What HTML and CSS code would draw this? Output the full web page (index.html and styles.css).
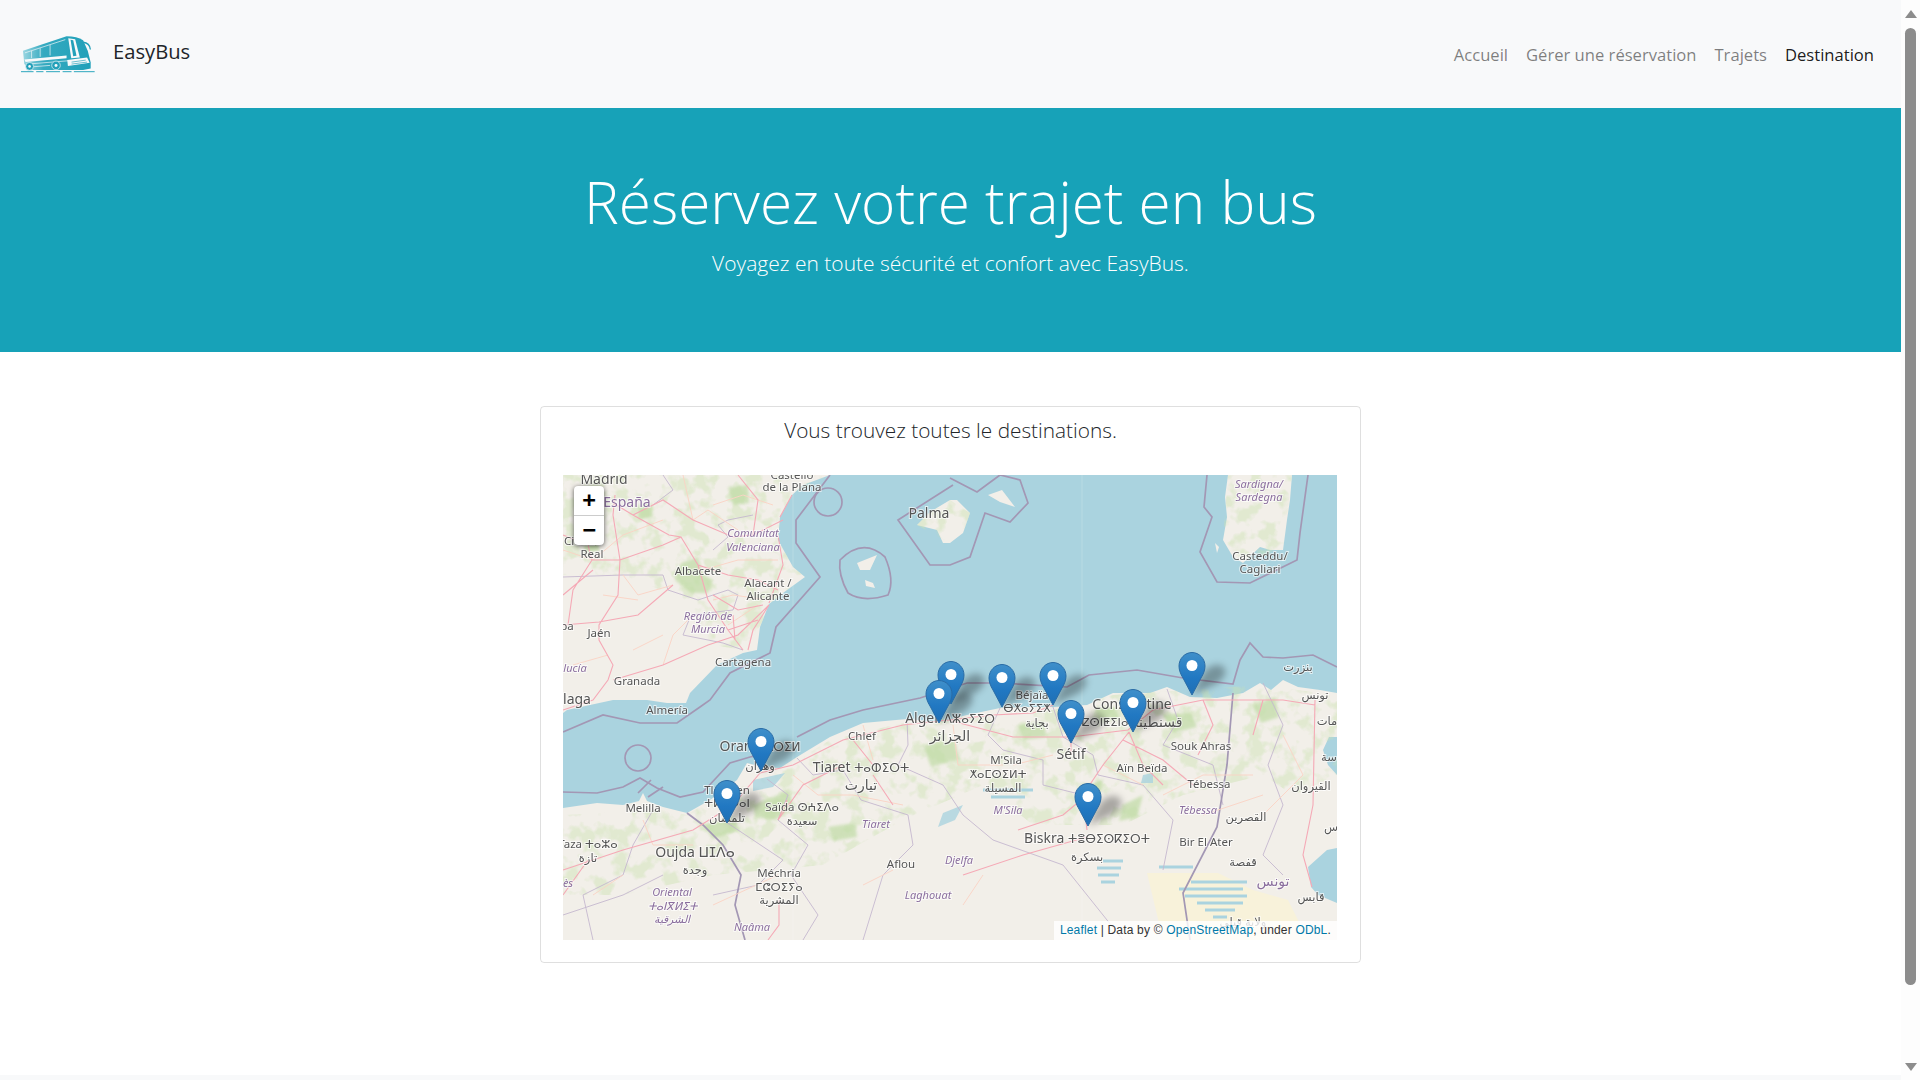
FILE: index.html
```html
<!DOCTYPE html>
<html lang="fr">

<head>
    <meta charset="UTF-8">
    <meta name="viewport" content="width=device-width, initial-scale=1.0">
    <title>EasyBus - Destination</title>
    <link rel="stylesheet" href="styles.css">
</head>

<body>
    <div class="page">
        <header class="navbar">
            <a class="brand" href="#">
                <svg class="brand-logo" viewBox="60 105 228 112" aria-hidden="true">
                    <defs>
                        <linearGradient id="busfade" x1="0" x2="1" y1="0" y2="0">
                            <stop offset="0" stop-color="#9ad6e1" />
                            <stop offset="0.3" stop-color="#35aac0" />
                            <stop offset="1" stop-color="#20a0b9" />
                        </linearGradient>
                    </defs>
                    <path fill="url(#busfade)" d="M68 150 L200 106 Q232 106 250 118 L264 150 L273 185 L273 203 L250 208 L90 208 L72 190 Z" />
                    <path fill="none" stroke="#f8f9fa" stroke-width="2" d="M74 156 L196 116 M94 150 L94 172 M120 142 L120 168 M150 132 L150 164" />
                    <path fill="#f8f9fa" d="M72 176 L200 164 L200 172 L76 184 Z" />
                    <path fill="none" stroke="#f8f9fa" stroke-width="2" d="M82 190 L205 180 M100 198 L150 194" />
                    <path fill="#f8f9fa" d="M205 112 L226 115 L240 170 L214 172 Z" />
                    <path fill="#23a0b9" d="M212 116 L220 118 L230 165 L220 166 Z" />
                    <path fill="#f8f9fa" d="M202 178 L262 170 L270 186 L204 196 Z" />
                    <path fill="none" stroke="#23a0b9" stroke-width="2" d="M215 184 L258 178 M215 190 L262 184" />
                    <circle cx="88" cy="197" r="12" fill="#23a0b9" stroke="#f8f9fa" stroke-width="2" />
                    <circle cx="168" cy="194" r="13" fill="#23a0b9" stroke="#f8f9fa" stroke-width="2" />
                    <circle cx="88" cy="197" r="4" fill="#f8f9fa" />
                    <circle cx="168" cy="194" r="4.500" fill="#f8f9fa" />
                    <path fill="none" stroke="#23a0b9" stroke-width="4" d="M250 124 Q270 126 272 146" />
                    <path fill="none" stroke="#2ba6bd" stroke-width="3" d="M62 213 H100 M108 213 H130 M138 213 H180 M188 213 H215 M222 213 H285" />
                </svg>
                <span class="brand-name">EasyBus</span>
            </a>
            <nav>
                <ul class="nav-list">
                    <li><a href="#">Accueil</a></li>
                    <li><a href="#">Gérer une réservation</a></li>
                    <li><a href="#">Trajets</a></li>
                    <li><a class="active" href="#">Destination</a></li>
                </ul>
            </nav>
        </header>

        <section class="hero">
            <h1>Réservez votre trajet en bus</h1>
            <p>Voyagez en toute sécurité et confort avec EasyBus.</p>
        </section>

        <main class="content">
            <div class="card">
                <h2>Vous trouvez toutes le destinations.</h2>
                <div class="map">
                    <svg class="map-canvas" viewBox="0 0 774 465" aria-label="Carte des destinations">
                        <defs>
                            <linearGradient id="pinfill" x1="0" x2="0" y1="0" y2="1">
                                <stop offset="0" stop-color="#3f8fca" />
                                <stop offset="0.6" stop-color="#2178c2" />
                                <stop offset="1" stop-color="#1f6fb4" />
                            </linearGradient>
                            <!-- patchy green on the hills -->
                            <filter id="mottle" x="0" y="0" width="100%" height="100%" color-interpolation-filters="sRGB">
                                <feTurbulence type="fractalNoise" baseFrequency="0.06" numOctaves="3" seed="7" />
                                <feColorMatrix type="matrix" values="0 0 0 0 0.80  0 0 0 0 0.89  0 0 0 0 0.70  6 0 0 0 -2.900" />
                            </filter>
                            <clipPath id="greenland">
                                <path d="M0 0 H267 L229 20 L217 42 L215 65 L230 92 L242 102 L206 129 L197 152 L180 175 L150 170 L110 120 L60 100 L0 100 Z" />
                                <path d="M354 50 L367 37 L387 25 L407 38 L400 58 L387 68 Z M665 0 H729 L720 75 L680 88 L660 65 Z" />
                                <path d="M0 340 L100 335 L124 340 L174 308 L217 296 L267 265 L344 247 L490 235 L550 220 L697 210 L757 218 L774 222 V300 L730 320 L700 300 L620 320 L560 350 L470 350 L420 310 L340 345 L260 390 L150 400 L60 420 L0 420 Z" />
                            </clipPath>
                            <g id="pin-shadow">
                                <path d="M0 0 L26 -12 Q40 -24 28 -30 Q18 -32 10 -20 Z" fill="rgba(0,0,0,.3)" class="pin-blur" />
                            </g>
                            <g id="pin">
                                <path d="M0 0 L-9 -17 C-11.500 -21 -13 -25 -13 -29 C-13 -36.500 -7 -42.500 0 -42.500 C7 -42.500 13 -36.500 13 -29 C13 -25 11.500 -21 9 -17 Z" fill="url(#pinfill)" stroke="#2a6ca6" stroke-width="1" />
                                <circle cx="0" cy="-29.500" r="5.500" fill="#fff" />
                            </g>
                        </defs>

                        <g class="map-base">
                            <rect class="water" width="774" height="465" />

                            <!-- land -->
                            <path class="land-eu" d="M0 0 H267 L240 10 L229 20 L217 42 L215 65 L230 92 L242 102 L224 115 L206 129 L197 152 L194 175 L180 178 L154 190 L127 218 L123 228 L104 228 L84 225 L50 225 L4 235 L0 238 Z" />
                            <path class="land-eu" d="M354 50 L367 37 L387 25 L394 25 L407 38 L400 58 L387 68 L380 68 L374 55 Z M425 20 L439 15 L452 32 L437 27 Z M294 88 L314 80 L307 95 L297 95 Z M302 105 L310 108 L312 113 L303 111 Z" />
                            <path class="land-eu" d="M665 0 H729 L727 25 L724 45 L720 75 L707 75 L697 72 L680 88 L670 82 L660 65 L664 42 L662 22 Z M652 68 L656 72 L654 78 Z" />
                            <path class="land-af" d="M0 333 L34 328 L60 330 L76 326 L80 318 L84 326 L100 332 L124 338 L147 325 L174 305 L184 288 L200 292 L217 293 L234 282 L267 262 L300 248 L344 244 L377 247 L404 240 L437 233 L460 232 L490 232 L524 230 L550 218 L587 218 L604 212 L627 222 L654 223 L680 218 L697 208 L708 215 L720 205 L735 212 L757 215 L774 218 V262 L766 262 L760 275 L765 290 L774 300 V373 L764 375 L745 392 L748 412 L755 420 L774 428 V465 H0 Z" />
                            <path class="land-sand" d="M584 398 H655 L690 415 L725 425 L745 465 H600 Z" />

                            <!-- green areas -->
                            <rect class="mottled" width="774" height="465" filter="url(#mottle)" clip-path="url(#greenland)" />
                            <path class="forest" d="M118 88 L135 82 L140 100 L150 105 L145 118 L128 118 L112 105 Z M75 30 L88 28 L90 42 L76 44 Z M20 66 L34 62 L36 76 L22 78 Z M165 12 L185 10 L186 28 L170 30 Z" />
                            <path class="forest" d="M190 330 L225 316 L232 332 L212 345 L192 342 Z M265 352 L292 348 L294 362 L270 366 Z M360 270 L392 266 L396 284 L368 292 Z M455 250 L480 246 L484 262 L460 265 Z M532 232 L552 232 L556 244 L536 248 Z M600 240 L628 238 L634 252 L610 258 Z M690 230 L712 222 L716 242 L698 248 Z M560 330 L580 320 L574 342 L556 346 Z M524 312 L540 304 L536 322 L524 326 Z M140 350 L172 342 L176 355 L150 364 Z" />

                            <!-- salt lakes -->
                            <g class="salt">
                                <path d="M628 407 H684 M616 414 H680 M622 421 H684 M634 428 H680 M642 435 H672 M650 442 H664 M596 392 H630 M540 386 H560 M534 393 H558 M535 400 H556 M538 407 H552 M420 315 H470 M428 322 H462" />
                            </g>
                            <path class="lake" d="M380 338 L400 330 L392 345 L375 352 Z M190 305 L222 298 L210 312 L190 316 Z M580 300 L590 298 L590 308 L578 308 Z" />

                            <!-- tile seams -->
                            <path class="seam" d="M230 0 V465 M519 0 V465" />

                            <!-- regional borders -->
                            <g class="region">
                                <path d="M100 0 L110 15 L90 30 M190 40 L165 45 L155 50 L165 62 L150 75 M0 102 L60 100 L100 100 L105 115 L135 125 L165 115 L175 120 L170 135 L128 140 L120 160 L160 168 L180 175" />
                                <path d="M204 304 L225 320 L215 345 L245 370 L228 400 L255 440 L240 465 M234 283 L250 300 L280 295 L298 325 L345 340 L350 370 L320 400 L300 465 M344 244 L345 270 L335 290 L380 310 L400 340 L430 365 L500 390 L540 440 L560 465 M437 233 L425 260 L440 275 L480 285 L480 310 L520 320 M490 232 L500 262 L530 280 L535 300 L580 310 L610 345 L600 395 M604 214 L615 245 L600 270 L650 290 L660 330 M700 208 L720 250 L705 290 L720 330 L700 380 L720 400 M90 335 L70 370 L60 400 L20 420 L30 465 M160 345 L220 385 L195 410 L150 420 M0 440 L60 420 L100 400" />
                            </g>

                            <!-- country borders and sea limits -->
                            <g class="border">
                                <path d="M124 338 L140 350 L160 370 L178 400 L172 430 L182 465 M670 218 L664 290 L654 352 L620 418 L627 465" />
                                <path d="M267 0 L233 45 L233 68 L257 102 L213 152 L207 178 L167 198 L147 225 L137 232 L114 248 L77 248 L40 240 L0 257" />
                                <path d="M0 317 L34 318 L60 312 L77 303 L94 313 L117 322 L140 317 L154 302 L167 288 L187 282 L205 278" />
                                <path d="M234 262 L267 245 L300 235 L357 223 L404 208 L437 208 L504 212 L526 200 L574 195 L620 203 L670 209 L677 185 L687 168 L700 182 L720 183 L750 180 L774 192" />
                                <path d="M644 0 L641 32 L649 42 L637 77 L654 107 L687 108 L734 85 L737 58 L745 0" />
                                <path d="M390 10 L335 45 L367 90 L387 90 L407 82 L422 38 L447 47 L465 28 L457 5 L437 0 L414 17 L387 3" />
                                <path d="M277 85 Q300 62 322 82 Q332 105 325 120 Q300 128 285 118 Q275 100 277 85 Z" />
                                <circle cx="265" cy="27" r="14" />
                                <circle cx="75" cy="283" r="13" />
                                <path d="M75 318 L88 305 M85 322 L100 312" />
                            </g>

                            <!-- minor roads -->
                            <g class="road-minor">
                                <path d="M0 75 L30 85 L60 60 L100 45 M60 100 L75 120 L110 110 M120 0 L130 45 L145 35 L175 55 M140 95 L175 85 L215 85 M150 125 L170 120 L205 125 M100 190 L110 160 L130 140 M40 120 L75 125 M10 190 L45 180 M70 175 L100 160 M210 30 L180 20 L150 30 M165 150 L195 130" />
                                <path d="M230 300 L255 320 L290 320 L340 330 M300 250 L310 285 M390 250 L395 290 L440 290 M450 290 L490 280 M540 290 L580 310 M600 320 L640 300 L690 300 M640 340 L700 320 M720 260 L740 300 L700 340 M80 345 L90 370 L130 370 M30 420 L60 400 M300 410 L330 395 M150 430 L215 400 M420 400 L400 430" />
                            </g>

                            <!-- roads -->
                            <g class="road">
                                <path d="M50 28 L70 40 L106 60 L118 62 L135 90 L165 100 L195 105 L215 115 M220 45 L190 60 L170 62 L130 45 L100 25 L70 40 M135 90 L145 125 L165 155 L180 175 M29 85 L57 85 L100 70 L118 62 M57 85 L50 40 L52 20 M57 85 L55 120 L36 150 L36 165 L50 190 L45 205 L30 225 L0 235 M0 150 L36 147 L75 140 L110 110 M50 205 L100 190 L145 170 L175 160 L206 130 M206 130 L190 155 L185 175 M215 60 L220 90 L206 128 M229 20 L217 42 M175 0 L195 25 L190 60 M0 60 L25 70 L29 85 L10 115 L5 150 M30 95 L0 120 M150 120 L175 135 L200 130 M165 155 L195 145 M170 140 L172 165" />
                                <path d="M197 298 L230 290 L280 265 L340 250 L385 245 L450 262 L508 262 L565 255 L590 235 L640 225 L720 225 L752 230 M197 298 L170 330 L130 355 L60 375 L0 395 M310 290 L290 265 M385 245 L430 240 L470 238 L490 230 M566 257 L580 290 L600 310 M566 257 L540 290 L520 320 L524 355 M508 262 L508 280 M524 362 L460 380 L400 400 M224 325 L215 345 L240 310 L280 290 M216 425 L216 450 L205 465 M749 412 L740 380 L750 330 L752 225 M310 300 L330 330 M0 420 L25 385 M640 225 L650 250 L635 280 M700 225 L690 260 M560 265 L600 285 L630 310 M455 355 L500 340 L524 320" />
                            </g>
                        </g>

                        <!-- labels -->
                        <g class="labels">
                            <text class="city big" x="41" y="9">Madrid</text>
                            <text class="area big" x="64" y="32">España</text>
                            <text class="city" x="20" y="70">Ciudad</text>
                            <text class="city" x="29" y="83">Real</text>
                            <text class="city" x="229" y="4">Castelló</text>
                            <text class="city" x="229" y="16">de la Plana</text>
                            <text class="city big" x="366" y="43">Palma</text>
                            <text class="area" x="190" y="62">Comunitat</text>
                            <text class="area" x="190" y="76">Valenciana</text>
                            <text class="city" x="135" y="100">Albacete</text>
                            <text class="city" x="205" y="112">Alacant /</text>
                            <text class="city" x="205" y="125">Alicante</text>
                            <text class="area" x="145" y="145">Región de</text>
                            <text class="area" x="145" y="158">Murcia</text>
                            <text class="city" x="36" y="162">Jaén</text>
                            <text class="city" x="4" y="155">ba</text>
                            <text class="area" x="12" y="197">lucía</text>
                            <text class="city" x="180" y="191">Cartagena</text>
                            <text class="city" x="74" y="210">Granada</text>
                            <text class="city big" x="14" y="229">laga</text>
                            <text class="city" x="104" y="239">Almería</text>
                            <text class="area" x="696" y="13">Sardigna/</text>
                            <text class="area" x="696" y="26">Sardegna</text>
                            <text class="city" x="697" y="85">Casteddu/</text>
                            <text class="city" x="697" y="98">Cagliari</text>

                            <text class="city big" x="197" y="276">Oran <tspan class="tif">ⵡⴷⵔⵉⵍ</tspan></text>
                            <text class="city" x="197" y="295">وهران</text>
                            <text class="city" x="299" y="265">Chlef</text>
                            <text class="city big" x="298" y="297">Tiaret <tspan class="tif">ⵜⴰⵀⵉⵔⵜ</tspan></text>
                            <text class="city big" x="298" y="315">تيارت</text>
                            <text class="city big" x="387" y="248">Alger <tspan class="tif">ⴷⵣⴰⵢⵉⵔ</tspan></text>
                            <text class="city big" x="387" y="266">الجزائر</text>
                            <text class="city" x="469" y="224">Béjaïa</text>
                            <text class="city" x="464" y="237">ⴱⵅⴰⵢⵉⵅ</text>
                            <text class="city" x="474" y="252">بجاية</text>
                            <text class="city big" x="569" y="234">Constantine</text>
                            <text class="city" x="542" y="251">ⵇⵙⵏⵟⵉⵏⴰ</text>
                            <text class="city big" x="594" y="252">قسنطينة</text>
                            <text class="city big" x="508" y="284">Sétif</text>
                            <text class="city" x="443" y="289">M'Sila</text>
                            <text class="city" x="435" y="303">ⵅⴰⵎⵙⵉⵍⵜ</text>
                            <text class="city" x="440" y="317">المسيلة</text>
                            <text class="area" x="445" y="339">M'Sila</text>
                            <text class="city" x="638" y="275">Souk Ahras</text>
                            <text class="city" x="579" y="297">Aïn Beïda</text>
                            <text class="city" x="646" y="313">Tébessa</text>
                            <text class="area" x="635" y="339">Tébessa</text>
                            <text class="city" x="748" y="315">القيروان</text>
                            <text class="city" x="683" y="346">القصرين</text>
                            <text class="city" x="643" y="371">Bir El Ater</text>
                            <text class="city" x="680" y="391">قفصة</text>
                            <text class="area big" x="710" y="411">تونس</text>
                            <text class="city" x="748" y="426">قابس</text>
                            <text class="city big" x="524" y="368">Biskra <tspan class="tif">ⵜⴻⴱⵉⵙⴽⵉⵔⵜ</tspan></text>
                            <text class="city" x="524" y="386">بسكرة</text>
                            <text class="city" x="752" y="224">تونس</text>
                            <text class="city" x="735" y="196">بنزرت</text>
                            <text class="city" x="680" y="451">ولاية قبلي</text>
                            <text class="area" x="396" y="389">Djelfa</text>
                            <text class="city" x="764" y="250">مات</text>
                            <text class="city" x="766" y="286">سة</text>
                            <text class="city" x="768" y="356">س</text>
                            <text class="city" x="80" y="337">Melilla</text>
                            <text class="city" x="164" y="319">Tlemcen</text>
                            <text class="city" x="164" y="332">ⵜⵍⵎⵙⴰⵏ</text>
                            <text class="city" x="164" y="347">تلمسان</text>
                            <text class="city" x="239" y="336">Saïda ⵙⵄⵉⴷⴰ</text>
                            <text class="city" x="239" y="350">سعيدة</text>
                            <text class="area" x="313" y="353">Tiaret</text>
                            <text class="city" x="25" y="373">Taza ⵜⴰⵣⴰ</text>
                            <text class="city" x="25" y="387">تازة</text>
                            <text class="city big" x="132" y="382">Oujda ⵡⵊⴷⴰ</text>
                            <text class="city" x="132" y="399">وجدة</text>
                            <text class="area" x="109" y="421">Oriental</text>
                            <text class="area" x="109" y="435">ⵜⴰⵏⴳⵍⵉⵜ</text>
                            <text class="area" x="109" y="448">الشرقية</text>
                            <text class="city" x="216" y="402">Méchria</text>
                            <text class="city" x="216" y="416">ⵎⵛⵔⵉⵢⴰ</text>
                            <text class="city" x="216" y="429">المشرية</text>
                            <text class="area" x="189" y="456">Naâma</text>
                            <text class="city" x="338" y="393">Aflou</text>
                            <text class="area" x="365" y="424">Laghouat</text>
                            <text class="area" x="5" y="412">ès</text>
                        </g>

                        <!-- markers: x, y = tip of the pin -->
                        <g class="pins">
                            <use href="#pin-shadow" x="198" y="296" />
                            <use href="#pin-shadow" x="164" y="348" />
                            <use href="#pin-shadow" x="388" y="229" />
                            <use href="#pin-shadow" x="376" y="248" />
                            <use href="#pin-shadow" x="439" y="232" />
                            <use href="#pin-shadow" x="490" y="230" />
                            <use href="#pin-shadow" x="508" y="268" />
                            <use href="#pin-shadow" x="570" y="257" />
                            <use href="#pin-shadow" x="629" y="220" />
                            <use href="#pin-shadow" x="525" y="351" />

                            <use href="#pin" x="198" y="296" />
                            <use href="#pin" x="164" y="348" />
                            <use href="#pin" x="388" y="229" />
                            <use href="#pin" x="376" y="248" />
                            <use href="#pin" x="439" y="232" />
                            <use href="#pin" x="490" y="230" />
                            <use href="#pin" x="508" y="268" />
                            <use href="#pin" x="570" y="257" />
                            <use href="#pin" x="629" y="220" />
                            <use href="#pin" x="525" y="351" />
                        </g>
                    </svg>

                    <div class="zoom-box">
                        <a class="zoom-btn" href="#">+</a>
                        <a class="zoom-btn" href="#">&minus;</a>
                    </div>
                    <div class="attribution">
                        <a href="#">Leaflet</a> | Data by &copy; <a href="#">OpenStreetMap</a>, under <a href="#">ODbL</a>.
                    </div>
                </div>
            </div>
        </main>

        <footer class="footer"></footer>
    </div>

    <div class="scrollbar">
        <span class="arrow-up"></span>
        <span class="thumb"></span>
        <span class="arrow-down"></span>
    </div>
</body>

</html>
```

FILE: styles.css
```css
/* General Styles */

body {
    font-family: "Open Sans", "Liberation Sans", sans-serif;
    margin: 0;
    padding: 0;
    background-color: #fff;
    color: #212529;
    display: flex;
    height: 1080px;
    overflow: hidden;
}

a {
    text-decoration: none;
}

.page {
    width: 1901px;
    display: flex;
    flex-direction: column;
}

/* Navbar */

.navbar {
    height: 108px;
    box-sizing: border-box;
    padding: 0 27px 0 20px;
    background-color: #f8f9fa;
    display: flex;
    align-items: center;
    justify-content: space-between;
}

.brand {
    display: flex;
    align-items: center;
    gap: 17px;
    color: #212529;
}

.brand-logo {
    width: 76px;
    height: 37px;
}

.brand-name {
    font-size: 20.200px;
    margin-bottom: 6px;
}

.nav-list {
    list-style: none;
    margin: 0;
    padding: 0;
    display: flex;
    gap: 18px;
    font-size: 16.600px;
}

.nav-list a {
    color: rgba(0, 0, 0, 0.5);
}

.nav-list a.active {
    color: rgba(0, 0, 0, 0.9);
}

/* Hero */

.hero {
    height: 244px;
    box-sizing: border-box;
    padding-top: 55px;
    background-color: #17a2b8;
    color: #fff;
    text-align: center;
}

.hero h1 {
    margin: 0 0 9px;
    font-size: 58.500px;
    line-height: 76px;
    font-weight: 300;
}

.hero p {
    margin: 0;
    font-size: 21px;
    line-height: 30px;
    font-weight: 300;
}

/* Card */

.content {
    flex: 1;
    padding-top: 54px;
}

.card {
    width: 821px;
    height: 557px;
    box-sizing: border-box;
    margin: 0 auto;
    padding: 10px 22px 0;
    border: 1px solid rgba(0, 0, 0, 0.125);
    border-radius: 4px;
}

.card h2 {
    margin: 0 0 24px;
    height: 34px;
    font-size: 20.800px;
    line-height: 26px;
    font-weight: 300;
    text-align: center;
}

/* Map */

.map {
    position: relative;
    width: 774px;
    height: 465px;
    overflow: hidden;
}

.map-canvas {
    display: block;
    width: 774px;
    height: 465px;
}

.map-base {
    filter: blur(0.5px);
}

.water {
    fill: #aad3df;
}

.land-eu,
.land-af {
    fill: #f2efe9;
}

.land-sand {
    fill: #f8f2da;
}

.mottled {
    opacity: 0.45;
}

.forest {
    fill: #bfdba4;
    opacity: 0.7;
    filter: blur(1.500px);
}

.lake {
    fill: #aad3df;
    opacity: 0.8;
}

.salt path {
    fill: none;
    stroke: #aad3df;
    stroke-width: 3;
}

.seam {
    fill: none;
    stroke: #fff;
    stroke-opacity: 0.18;
    stroke-width: 1;
}

.region path {
    fill: none;
    stroke: #c5b8cf;
    stroke-width: 0.9;
}

.border path,
.border circle {
    fill: none;
    stroke: #a397b4;
    stroke-width: 1.7;
}

.road-minor path {
    fill: none;
    stroke: #fbd3c4;
    stroke-width: 0.9;
}

.road path {
    fill: none;
    stroke: #f5a9b6;
    stroke-width: 1.1;
}

.labels {
    filter: blur(0.3px);
}

.labels text {
    font-family: "Noto Sans", "DejaVu Sans", sans-serif;
    font-size: 11.500px;
    text-anchor: middle;
    paint-order: stroke;
    stroke: rgba(255, 255, 255, 0.65);
    stroke-width: 2px;
}

.labels .city {
    fill: #555;
}

.labels .area {
    fill: #8b6f9e;
    font-style: italic;
    font-size: 11px;
}

.labels .big {
    font-size: 14px;
}

.labels .tif {
    font-size: 12px;
}

.labels .area.big {
    font-style: normal;
}

.pin-blur {
    filter: blur(3.500px);
}

.zoom-box {
    position: absolute;
    left: 11px;
    top: 11px;
    width: 30px;
    background-color: #fff;
    border-radius: 4px;
    box-shadow: 0 1px 5px rgba(0, 0, 0, 0.65);
}

.zoom-btn {
    display: block;
    height: 29px;
    line-height: 28px;
    text-align: center;
    color: #000;
    font-family: "DejaVu Sans Mono", "Liberation Mono", monospace;
    font-size: 22px;
    font-weight: bold;
}

.zoom-btn:first-child {
    border-bottom: 1px solid #ccc;
}

.attribution {
    position: absolute;
    right: 0;
    bottom: 0;
    padding: 1px 6px 2px 6px;
    background-color: rgba(255, 255, 255, 0.8);
    color: #333;
    font-family: "Liberation Sans", Arial, sans-serif;
    font-size: 12px;
    line-height: 16px;
    letter-spacing: 0.18px;
}

.attribution a {
    color: #0078a8;
}

/* Footer */

.footer {
    height: 5px;
    background-color: #f8f9fa;
}

/* Scrollbar */

.scrollbar {
    position: relative;
    width: 19px;
    height: 1080px;
    background-color: #fdfdfd;
    display: flex;
    flex-direction: column;
    align-items: center;
}

.arrow-up,
.arrow-down {
    width: 0;
    height: 0;
    border-left: 6px solid transparent;
    border-right: 6px solid transparent;
}

.arrow-up {
    margin-top: 10px;
    border-bottom: 8px solid #8c8c8c;
}

.arrow-down {
    margin-top: 78px;
    border-top: 8px solid #8c8c8c;
}

.thumb {
    width: 11px;
    height: 957px;
    margin-top: 10px;
    background-color: #8c8c8c;
    border-radius: 6px;
}
```
